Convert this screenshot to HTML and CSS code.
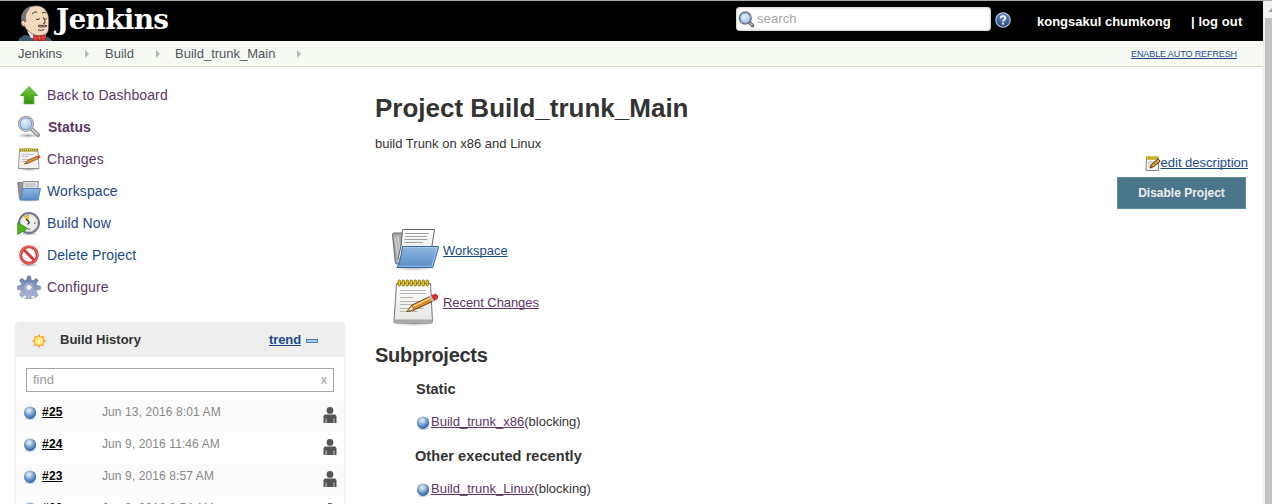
FILE: index.html
```html
<!DOCTYPE html>
<html lang="en">
<head>
<meta charset="utf-8">
<title>Build_trunk_Main [Jenkins]</title>
<link rel="stylesheet" href="styles.css">
</head>
<body>
<svg class="defs" aria-hidden="true">
  <defs>
    <linearGradient id="gGreen" x1="0" y1="0" x2="0" y2="1"><stop offset="0" stop-color="#7bd343"/><stop offset="1" stop-color="#2d9305"/></linearGradient>
    <linearGradient id="gFolder" x1="0" y1="0" x2="0" y2="1"><stop offset="0" stop-color="#8fb7df"/><stop offset="1" stop-color="#5c8dc8"/></linearGradient>
    <linearGradient id="gPaper" x1="0" y1="0" x2="0" y2="1"><stop offset="0" stop-color="#fff"/><stop offset="1" stop-color="#e4e4e2"/></linearGradient>
    <linearGradient id="gGear" x1="0" y1="0" x2="0" y2="1"><stop offset="0" stop-color="#6379a8"/><stop offset="1" stop-color="#b7c0da"/></linearGradient>
    <radialGradient id="gBall" cx=".43" cy=".33" r=".65"><stop offset="0" stop-color="#edf2e6"/><stop offset=".3" stop-color="#b4cadf"/><stop offset=".65" stop-color="#6493c6"/><stop offset="1" stop-color="#2b60a8"/></radialGradient>
    <radialGradient id="gLens" cx=".4" cy=".35" r=".7"><stop offset="0" stop-color="#e6f0fb"/><stop offset="1" stop-color="#9cc0e8"/></radialGradient>
    <radialGradient id="gSun"><stop offset="0" stop-color="#fffbd0"/><stop offset="1" stop-color="#ffd84a"/></radialGradient>
    <radialGradient id="gHelp" cx=".5" cy=".25" r=".8"><stop offset="0" stop-color="#6f93c4"/><stop offset="1" stop-color="#1c3f7e"/></radialGradient>
    <radialGradient id="gShadow"><stop offset="0" stop-color="#000" stop-opacity=".35"/><stop offset="1" stop-color="#000" stop-opacity="0"/></radialGradient>
    <symbol id="ball" viewBox="0 0 16 16">
      <ellipse cx="8" cy="13.3" rx="6.500" ry="2.200" fill="url(#gShadow)"/>
      <circle cx="8" cy="7.700" r="6.200" fill="url(#gBall)"/>
    </symbol>
    <symbol id="folder" viewBox="0 0 48 48">
      <ellipse cx="23" cy="42" rx="23" ry="4" fill="url(#gShadow)"/>
      <path d="M1.500 9.500q0-1.500 1.500-1.500h8l2 4h24v27H6q-1.500 0-1.700-1.500z" fill="#aaa" stroke="#666"/>
      <path d="M4 12l4 25M7 11l2 22" stroke="#d5d5d5" stroke-width="1.300"/>
      <path d="M11.500 4.500h32L39 34H7q4-13 4.500-29.500z" fill="url(#gPaper)" stroke="#686868"/>
      <path d="M14 8.500h24M14 11.500h22M13.500 14.500h23M13.500 17.500h18" stroke="#a0a0a0"/>
      <path d="M11.500 21.500H47q.8 0 .5 1L42 41.500q-.3 1-1.200 1H6q3-3 5.500-21z" fill="url(#gFolder)" stroke="#3465a4"/>
      <path d="M12.500 22.500h33.800L41 41.300H7.500" fill="none" stroke="#b4d0ee" stroke-opacity=".7"/>
    </symbol>
    <symbol id="folder-small" viewBox="0 0 24 24">
      <ellipse cx="12" cy="21" rx="12" ry="2" fill="url(#gShadow)"/>
      <path d="M.7 3.500h4.800l1 2h13V20H2.500z" fill="#929292" stroke="#777" stroke-width=".8"/>
      <path d="M6 2.500h15.500L20 15H4.500Q6 8 6 2.500z" fill="#dedede" stroke="#858585" stroke-width=".9"/>
      <path d="M8 5h10.500M8 7h10" stroke="#aaa" stroke-width=".8"/>
      <path d="M6 9.500h17.500L21 21H3q2-4 3-11.500z" fill="url(#gFolder)" stroke="#4b7ebd" stroke-width=".9"/>
    </symbol>
    <symbol id="notepad" viewBox="0 0 48 48">
      <ellipse cx="23" cy="45" rx="21" ry="3" fill="url(#gShadow)"/>
      <path d="M5.500 5.500h34l2 38q0 1.500-1.500 1.500H4.500q-1.500 0-1.500-1.500z" fill="url(#gPaper)" stroke="#777"/>
      <path d="M3.500 41.500h38v2.500h-38z" fill="#aaa"/>
      <path d="M9 12.500h26M9 15.500h26M9 19.500h13M9 23.500h26M9 26.500h22M9 30.500h24M9 33.500h18" stroke="#b4b4b4"/>
      <g fill="#e6c91b" stroke="#796500" stroke-width=".8"><rect x="7" y="2" width="2.500" height="6" rx="1.200"/><rect x="11" y="2" width="2.500" height="6" rx="1.200"/><rect x="15" y="2" width="2.500" height="6" rx="1.200"/><rect x="19" y="2" width="2.500" height="6" rx="1.200"/><rect x="23" y="2" width="2.500" height="6" rx="1.200"/><rect x="27" y="2" width="2.500" height="6" rx="1.200"/><rect x="31" y="2" width="2.500" height="6" rx="1.200"/><rect x="35" y="2" width="2.500" height="6" rx="1.200"/></g>
      <path d="M16 33.500l5-6.500 18-8.500 3.500 4.500L23 32z" fill="#d98b26" stroke="#70420d"/>
      <path d="M22 28.500l17-8.500" stroke="#f9cf83" stroke-width="1.500"/>
      <path d="M16 33.500l5-6.500 2 5z" fill="#efd9b5" stroke="#70420d" stroke-width=".7"/>
      <path d="M37.500 19l3.500 4.700 3-1.400-3.400-4.900z" fill="#b8bcc4"/>
      <path d="M40.500 17.400l4-1.400q3 1 2 4.500l-3 2z" fill="#e32b2b" stroke="#9c1818" stroke-width=".6"/>
    </symbol>
    <symbol id="notepad-small" viewBox="0 0 24 24">
      <ellipse cx="12" cy="22.500" rx="11" ry="1.500" fill="url(#gShadow)"/>
      <path d="M2.500 3h18.500l1 18.500H1.500z" fill="#f1f1ef" stroke="#999"/>
      <path d="M1.500 21.500h20.500" stroke="#909090"/>
      <path d="M2.500 3h18.500" stroke="#8f8220" stroke-width="3"/>
      <path d="M3.500 3h17" stroke="#dfca55" stroke-width="2.400" stroke-dasharray="1.200 .9"/>
      <path d="M5 7.500h12M5 9.500h6M5 12.500h12M5 14.500h7" stroke="#b8b8b8" stroke-width=".9"/>
      <path d="M7.500 17l3-3.500 9.500-4.300 1.500 2.300-10.500 4.800z" fill="#dc9440" stroke="#80500f" stroke-width=".8"/>
      <path d="M20 9.200l2-.9q1.600.5 1.300 2.300l-1.800.9z" fill="#df382f"/>
    </symbol>
    <symbol id="edit" viewBox="0 0 16 16">
      <path d="M1.500 2h11.500l.7 12.500H1z" fill="#f4f4f2" stroke="#858585"/>
      <path d="M1 2h12.500" stroke="#8d7800" stroke-width="3"/>
      <path d="M1.500 2h12" stroke="#f0d329" stroke-width="2.400" stroke-dasharray="1.200 .8"/>
      <path d="M3.500 6h7M3.500 8h5M3.500 10h3" stroke="#b5b5b5"/>
      <path d="M5 12l1.500-3.500 6.500-5.500 2.300 2.200-6.800 5.500z" fill="#d79a45" stroke="#5c3708" stroke-width="1"/>
    </symbol>
    <symbol id="lens" viewBox="0 0 24 24">
      <ellipse cx="11" cy="20.500" rx="11" ry="2.500" fill="url(#gShadow)"/>
      <path d="M14 13.500l7 6.500" stroke="#8b8d89" stroke-width="4.200" stroke-linecap="round"/>
      <path d="M14.500 14l6 5.500" stroke="#d0d0ce" stroke-width="1.800" stroke-linecap="round"/>
      <circle cx="9" cy="8.800" r="7" fill="url(#gLens)" stroke="#989a98" stroke-width="2.200"/>
      <circle cx="9" cy="8.800" r="6.700" fill="none" stroke="#e3e3e3" stroke-width=".8"/>
      <circle cx="9" cy="8.800" r="5.800" fill="none" stroke="#6594cc" stroke-width=".7"/>
    </symbol>
    <symbol id="person" viewBox="0 0 14 16">
      <circle cx="7" cy="3.400" r="3.400" fill="#555"/>
      <path d="M2.500 7.500h9q2 0 2 2V16h-2.200v-4.500h-.7V16H3.400v-4.500h-.7V16H.5V9.500q0-2 2-2z" fill="#555"/>
    </symbol>
  </defs>
</svg>
<div class="window">
  <div class="page">
    <header class="header">
      <a class="brand">
        <svg class="butler" viewBox="0 0 34 36">
          <path d="M0 36q1-4 7-6l11 2 12 0q3 1 4 4z" fill="#38586c"/>
          <path d="M9 26l4 7 8 1 7-1 0-5z" fill="#f4f4f4"/>
          <path d="M4 17Q3 9 8 4.500 12 .8 18 .8q7 0 10 5 3 4 2.800 10l-.3 9q-1 5-7 6-6 1-11-3-5-3-6.500-8z" fill="#f2d9bb" stroke="#4a4038" stroke-width=".6"/>
          <path d="M4 18Q1 9 8 3.500q3-2.500 7-2.700-4 2-5.500 6Q7 10 8.500 16L6 18z" fill="#77767a"/>
          <path d="M6 15q-3.500 0-3 3t3.500 4" fill="#f2d9bb" stroke="#3a322c" stroke-width=".8"/>
          <path d="M14 9q2-2.500 5-2M24 8q2-1.500 4 0M18 14q2 1.500 4-.5M26 14q1.500 1 3-.5M25 12q2.500 4 2 6l-2 .8M20 21q1-1.500 4-.5 3-1 5 .5-2 1.500-5 .8-2 .8-4-.8M20 25q4 1 6-.5" fill="none" stroke="#332a24" stroke-width=".9"/>
          <path d="M15.500 30q3 0 5 1.800 3-2.300 7-1.800V36h-12z" fill="#e23a36" stroke="#8a1818" stroke-width=".6"/>
          <path d="M20 31h3v4h-3z" fill="#f8605a" stroke="#701010" stroke-width=".6"/>
        </svg>
        <span class="wordmark">Jenkins</span>
      </a>
      <div class="search">
        <svg class="search-icon" viewBox="0 0 17 17"><path d="M11 11l3.500 3.500" stroke="#666" stroke-width="3.600" stroke-linecap="round"/><path d="M12 12l2.500 2.500" stroke="#ccc" stroke-width="1.300"/><circle cx="7.300" cy="7" r="6" fill="url(#gLens)" stroke="#777" stroke-width="1.300"/><circle cx="7.300" cy="7" r="4.900" fill="none" stroke="#5d8fc9" stroke-width=".7"/></svg>
        <span>search</span>
      </div>
      <svg class="help" viewBox="0 0 16 16"><circle cx="8" cy="8" r="7.200" fill="url(#gHelp)" stroke="#bcd0ec" stroke-width="1.100"/><path d="M5.700 6.200Q5.700 4 8 4t2.300 2q0 1.200-1.300 1.900-1 .5-1 1.700" fill="none" stroke="#fff" stroke-width="1.700"/><rect x="7.100" y="10.700" width="1.900" height="1.800" fill="#fff"/></svg>
      <b class="user">kongsakul chumkong</b>
      <b class="logout">| log out</b>
    </header>
    <nav class="crumbs">
      <span class="c1">Jenkins</span><i class="tri"></i>
      <span class="c2">Build</span><i class="tri"></i>
      <span class="c3">Build_trunk_Main</span><i class="tri"></i>
      <a class="refresh">ENABLE AUTO REFRESH</a>
    </nav>
    <div class="body">
      <aside class="side">
        <ul class="tasks">
          <li class="visited"><svg viewBox="0 0 24 24"><ellipse cx="12" cy="20.500" rx="9" ry="2" fill="url(#gShadow)"/><path d="M12 3.500l8.500 9h-3.700v8H7.200v-8H3.500z" fill="url(#gGreen)" stroke="#3c951a" stroke-width=".8"/></svg><a>Back to Dashboard</a></li>
          <li class="visited current"><svg><use href="#lens"/></svg><a>Status</a></li>
          <li class="visited"><svg><use href="#notepad-small"/></svg><a>Changes</a></li>
          <li><svg><use href="#folder-small"/></svg><a>Workspace</a></li>
          <li><svg viewBox="0 0 24 24"><ellipse cx="12" cy="23" rx="10" ry="1.500" fill="url(#gShadow)"/><circle cx="12" cy="12" r="10" fill="#eeeeeb" stroke="#74748e" stroke-width="2"/><circle cx="12" cy="12" r="8.600" fill="none" stroke="#c3c3c9" stroke-width=".7"/><path d="M12 11.500L6.500 5.500Q9 3.300 12 3.500z" fill="#e2bf3d"/><path d="M12 17.500v1.500M17 12h1.500M9 8l3.500 3.500-2 2" fill="none" stroke="#333" stroke-width="1.100"/><path d="M.7 11.500l10 6-10 6z" fill="#4fb51d" stroke="#348d10" stroke-width=".8"/></svg><a>Build Now</a></li>
          <li><svg viewBox="0 0 24 24"><ellipse cx="12" cy="22" rx="10" ry="2" fill="url(#gShadow)"/><circle cx="12" cy="12" r="8.300" fill="#fff" stroke="#d93a3a" stroke-width="3"/><path d="M6.300 6.300l11.400 11.400" stroke="#d93a3a" stroke-width="3"/><circle cx="12" cy="12" r="8.600" fill="none" stroke="#f18b8b" stroke-width=".7"/></svg><a>Delete Project</a></li>
          <li class="visited"><svg viewBox="0 0 24 24"><ellipse cx="12" cy="23" rx="9" ry="1.500" fill="url(#gShadow)"/><g fill="url(#gGear)" stroke="#7c8ab0" stroke-width=".6"><path d="M10.400 1h3.200l.6 3.700 2.100.9 2.900-2.400 2.300 2.300-2.300 3 .9 2.100 3.400.6v3.200l-3.500.6-.9 2.100 2.200 2.900-2.300 2.300-3-2.100-2 .8-.6 3.300h-3.200l-.6-3.400-2-.8-2.900 2.100-2.300-2.300 2.100-2.900-.9-2.100-3.300-.6v-3.200l3.400-.6.9-2.100-2.200-3 2.300-2.300 3 2.400 2-.8z"/></g><circle cx="12" cy="12.500" r="4.800" fill="#a3b0cf"/><circle cx="12" cy="12.500" r="3" fill="#fff" stroke="#7685ae" stroke-width=".7"/></svg><a>Configure</a></li>
        </ul>
        <section class="history">
          <div class="history-head">
            <svg class="sun" viewBox="0 0 16 16"><path d="M8 .8l1.500 2.800L12.900 3l-.6 3.300L15.400 8l-3.100 1.700.6 3.300-3.400-.6L8 15.200l-1.500-2.800-3.400.6.600-3.300L.6 8l3.100-1.700L3.100 3l3.400.6z" fill="#f5a04a"/><circle cx="8" cy="8" r="4.800" fill="url(#gSun)" stroke="#efaa35" stroke-width=".8"/></svg>
            <b class="title">Build History</b><a class="trend">trend</a><i class="collapse"></i>
          </div>
          <div class="find"><span>find</span><span class="clear">x</span></div>
          <div class="run"><svg class="ball"><use href="#ball"/></svg><a>#25</a><time>Jun 13, 2016 8:01 AM</time><svg class="person"><use href="#person"/></svg></div>
          <div class="run"><svg class="ball"><use href="#ball"/></svg><a>#24</a><time>Jun 9, 2016 11:46 AM</time><svg class="person"><use href="#person"/></svg></div>
          <div class="run"><svg class="ball"><use href="#ball"/></svg><a>#23</a><time>Jun 9, 2016 8:57 AM</time><svg class="person"><use href="#person"/></svg></div>
          <div class="run"><svg class="ball"><use href="#ball"/></svg><a>#22</a><time>Jun 9, 2016 8:54 AM</time><svg class="person"><use href="#person"/></svg></div>
        </section>
      </aside>
      <main class="main">
        <h1>Project Build_trunk_Main</h1>
        <p class="desc">build Trunk on x86 and Linux</p>
        <div class="edit"><svg><use href="#edit"/></svg><a>edit description</a></div>
        <button class="disable">Disable Project</button>
        <div class="big"><svg><use href="#folder"/></svg><a>Workspace</a></div>
        <div class="big changes"><svg><use href="#notepad"/></svg><a class="visited-link">Recent Changes</a></div>
        <h2>Subprojects</h2>
        <h3>Static</h3>
        <div class="sub"><svg class="ball"><use href="#ball"/></svg><a class="visited-link">Build_trunk_x86</a><span>(blocking)</span></div>
        <h3 class="other">Other executed recently</h3>
        <div class="sub"><svg class="ball"><use href="#ball"/></svg><a class="visited-link">Build_trunk_Linux</a><span>(blocking)</span></div>
      </main>
    </div>
  </div>
  <div class="scroll"><i class="arrow"></i><i class="thumb"></i></div>
</div>
</body>
</html>
```
FILE: styles.css
```css
* { box-sizing: border-box; }
html, body { margin: 0; height: 504px; overflow: hidden; }
body { font: 13px/20px "Liberation Sans", Arial, sans-serif; color: #333; background: #fff; }
svg { display: block; flex: none; }
a, span, b, time { white-space: nowrap; }
a { text-decoration-skip-ink: none; }
.defs { position: absolute; width: 0; height: 0; }
.window { display: flex; height: 504px; border-top: 1px solid #a8a8a8; overflow: hidden; }
.page { width: 1263px; flex: none; overflow: hidden; }

.header { display: flex; height: 40px; background: #000; color: #fff; overflow: hidden; }
.brand { display: flex; width: 736px; padding-left: 18px; }
.butler { width: 34px; height: 36px; margin-top: 4px; }
.wordmark { font: bold 28px/36px "DejaVu Serif", serif; letter-spacing: -.75px; margin: 1px 0 0 4px; }
.search { display: flex; align-items: center; width: 255px; height: 24px; margin-top: 6px; padding-left: 2px; background: #fff; border-radius: 4px; box-shadow: inset 0 0 3px #999; color: #a5a5a5; }
.search-icon { width: 17px; height: 17px; margin-right: 2px; }
.search span { letter-spacing: .1px; }
.help { width: 16px; height: 16px; margin: 11px 0 0 4px; }
.user { margin: 11px 0 0 26px; width: 154px; }
.logout { margin-top: 11px; letter-spacing: .08px; }

.crumbs { display: flex; height: 26px; padding-left: 18px; line-height: 25px; background: #f6faf2; border-bottom: 1px solid #d3d7cf; color: #4d545d; }
.c1 { width: 67px; } .c2 { width: 51px; margin-left: 16px; } .c3 { width: 122px; margin-left: 15px; }
.tri { width: 4px; height: 8px; margin-top: 9px; background: #b5b8b2; clip-path: polygon(0 0, 100% 50%, 0 100%); }
.refresh { margin: 0 26px 0 auto; font-size: 9px; line-height: 26px; letter-spacing: -.1px; color: #204a87; text-decoration: underline; }

.body { display: flex; }
.side { width: 375px; flex: none; padding: 12px 0 0 15px; }
.tasks { list-style: none; margin: 0; padding: 0 0 0 2px; height: 243px; font-size: 14px; letter-spacing: .1px; color: #204a87; }
.tasks li { display: flex; align-items: center; height: 32px; gap: 6px; }
.tasks svg { width: 24px; height: 24px; }
.tasks .visited { color: #5c3566; }
.tasks .current { font-weight: bold; gap: 7px; letter-spacing: 0; }

.history { width: 330px; border: solid #eee; border-width: 0 1px; border-radius: 4px 4px 0 0; }
.history-head { display: flex; align-items: center; height: 35px; padding-left: 15px; background: #eee; border-radius: 4px 4px 0 0; }
.sun { width: 16px; height: 16px; margin-top: 3px; }
.title { width: 222px; padding-left: 13px; }
.trend { font-weight: bold; letter-spacing: -.1px; color: #204a87; text-decoration: underline; }
.collapse { width: 12px; height: 4px; margin: 3px 0 0 5px; background: #a9cbea; border: 1px solid #4a7fb8; }
.find { display: flex; justify-content: space-between; height: 24px; margin: 11px 10px 8px; padding: 1px 6px; border: 1px solid #a5a5a5; color: #999; }
.find .clear { font-size: 12px; line-height: 21px; }
.run { display: flex; height: 32px; padding: 2px 7px 0; font-size: 12px; }
.run:nth-child(odd) { background: #fbfbfb; }
.ball { width: 16px; height: 16px; }
.run .ball { margin: 3px 4px 0 -1px; }
.run a { width: 60px; font-weight: bold; letter-spacing: .25px; color: #000; text-decoration: none; }
.run a::first-line { text-decoration: underline; }
.run time { color: #888; letter-spacing: .1px; }
.run .person { width: 14px; height: 16px; margin: 5px 0 0 auto; }

.main { width: 888px; flex: none; display: flex; flex-direction: column; }
h1, h2, h3, p { margin: 0; }
h1 { font-size: 26px; line-height: 32px; margin-top: 25px; }
.desc { margin-top: 10px; }
.edit { display: flex; align-self: flex-end; margin-right: 15px; height: 24px; margin-top: -1px; color: #204a87; }
.edit svg { width: 16px; height: 16px; margin-top: 3px; }
.edit a, .big a, .sub a { text-decoration: underline; }
.disable { align-self: flex-end; width: 129px; height: 32px; margin-right: 17px; padding: 0; background: #4b758b; border: 1px solid #5c8ba3; color: #eee; font: bold 12px "Liberation Sans", Arial, sans-serif; }
.big { display: flex; align-items: center; height: 48px; margin: 16px 0 0 16px; gap: 4px; color: #204a87; }
.big svg { width: 48px; height: 48px; }
.big a { padding-top: 3px; }
.changes { margin-top: 5px; }
.changes a { padding-top: 1px; letter-spacing: -.07px; }
.visited-link { color: #5c3566; }
h2 { font-size: 20px; line-height: 24px; margin-top: 17px; letter-spacing: -.27px; }
h3 { font-size: 14.500px; line-height: 20px; margin: 12px 0 0 41px; }
.other { margin-left: 40px; margin-top: 14px; letter-spacing: .07px; }
.sub { display: flex; height: 20px; margin: 13px 0 0 40px; }
.sub .ball { margin-top: 3px; }

.scroll { width: 9px; background: #f0f0f0; flex: none; }
.arrow { display: block; width: 8px; height: 4px; margin: 7px 0 6px 5px; background: #a3a3a3; clip-path: polygon(50% 0, 100% 100%, 0 100%); }
.thumb { display: block; height: 500px; margin-left: 2px; background: #c1c1c1; }
```
